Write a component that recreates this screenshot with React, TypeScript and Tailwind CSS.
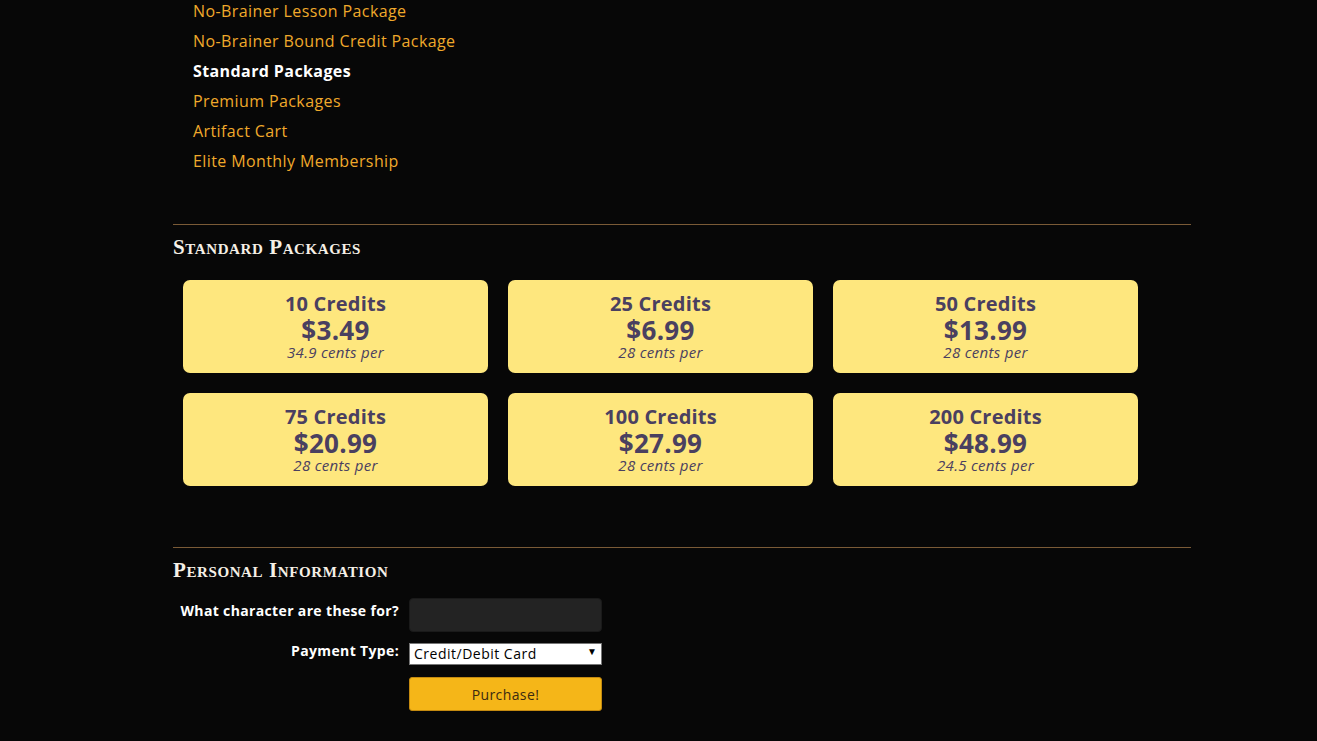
import { useState } from 'react';

const navLinks = [
  { label: 'No-Brainer Lesson Package', active: false },
  { label: 'No-Brainer Bound Credit Package', active: false },
  { label: 'Standard Packages', active: true },
  { label: 'Premium Packages', active: false },
  { label: 'Artifact Cart', active: false },
  { label: 'Elite Monthly Membership', active: false }
];

const packages = [
  { credits: '10 Credits', price: '$3.49', per: '34.9 cents per' },
  { credits: '25 Credits', price: '$6.99', per: '28 cents per' },
  { credits: '50 Credits', price: '$13.99', per: '28 cents per' },
  { credits: '75 Credits', price: '$20.99', per: '28 cents per' },
  { credits: '100 Credits', price: '$27.99', per: '28 cents per' },
  { credits: '200 Credits', price: '$48.99', per: '24.5 cents per' }
];

const body = { fontFamily: '"Open Sans", "Liberation Sans", sans-serif' };
const serif = {
  fontFamily: '"Liberation Serif", "DejaVu Serif", serif',
  fontVariant: 'small-caps'
};

export default function App() {
  const [character, setCharacter] = useState('');
  const [payment, setPayment] = useState('card');

  return (
    <div className="min-h-[741px] w-full bg-[#070707] overflow-hidden" style={body}>
      <div className="ml-[173px] w-[1018px]">
        {/* side nav */}
        <ul className="-mt-1 pl-5">
          {navLinks.map((l) => (
            <li key={l.label} className="h-[30px] leading-[30px] text-[16px] tracking-[0.4px]">
              <a
                href="#"
                className={
                  l.active
                    ? 'text-white font-bold'
                    : 'text-[#f0a92b] hover:text-white'
                }
              >
                {l.label}
              </a>
            </li>
          ))}
        </ul>

        <hr className="mt-[48px] border-0 border-t border-[#7a5a36]" />

        {/* packages */}
        <h2
          className="mt-[10px] text-[21px] leading-[24px] font-bold tracking-[0.6px] text-[#f5f0e6]"
          style={serif}
        >
          Standard Packages
        </h2>
        <div className="mt-[21px] pl-[10px] grid grid-cols-[305px_305px_305px] gap-x-[20px] gap-y-[20px]">
          {packages.map((p) => (
            <button
              key={p.credits}
              className="h-[93px] rounded-[7px] bg-[#fee77e] text-[#4a4060] flex flex-col items-center pt-[13px]"
            >
              <span className="text-[20px] leading-[22px] font-bold tracking-[0.2px]">{p.credits}</span>
              <span className="mt-[2px] text-[26px] leading-[26px] font-bold tracking-[0.3px]">{p.price}</span>
              <span className="text-[15px] leading-[18px] italic tracking-[0.3px]">{p.per}</span>
            </button>
          ))}
        </div>

        <hr className="mt-[61px] border-0 border-t border-[#7a5a36]" />

        {/* personal info */}
        <h2
          className="mt-[10px] text-[21px] leading-[24px] font-bold tracking-[0.6px] text-[#f5f0e6]"
          style={serif}
        >
          Personal Information
        </h2>
        <div className="mt-[16px] flex flex-col">
          <div className="flex items-start gap-[10px]">
            <label className="w-[226px] pt-[3px] leading-[20px] text-right text-white font-bold text-[14px] tracking-[0.35px]">
              What character are these for?
            </label>
            <input
              value={character}
              onChange={(e) => setCharacter(e.target.value)}
              className="w-[193px] h-[34px] rounded-[4px] bg-[#232323] border border-[#1a1a1a] px-2 text-white text-[14px] outline-none"
            />
          </div>
          <div className="mt-[9px] flex items-start gap-[10px]">
            <label className="w-[226px] leading-[20px] text-right text-white font-bold text-[14px] tracking-[0.35px]">
              Payment Type:
            </label>
            <div className="relative w-[193px] h-[22px]">
              <select
                value={payment}
                onChange={(e) => setPayment(e.target.value)}
                className="appearance-none w-full h-[22px] bg-white text-black text-[14px] leading-[20px] pl-[4px] tracking-[0.5px] border border-[#767676]"
              >
                <option value="card">Credit/Debit Card</option>
                <option value="paypal">PayPal</option>
              </select>
              <span className="pointer-events-none absolute right-[5px] top-[3px] text-[10px] text-black">
                ▼
              </span>
            </div>
          </div>
          <div className="mt-[14px] pl-[236px]">
            <button className="w-[193px] h-[34px] rounded-[3px] bg-[#f5b618] border border-[#c48a10] text-[#3b2a10] text-[14px] tracking-[0.4px]">
              Purchase!
            </button>
          </div>
        </div>
        <div className="h-[30px]" />
      </div>
    </div>
  );
}
